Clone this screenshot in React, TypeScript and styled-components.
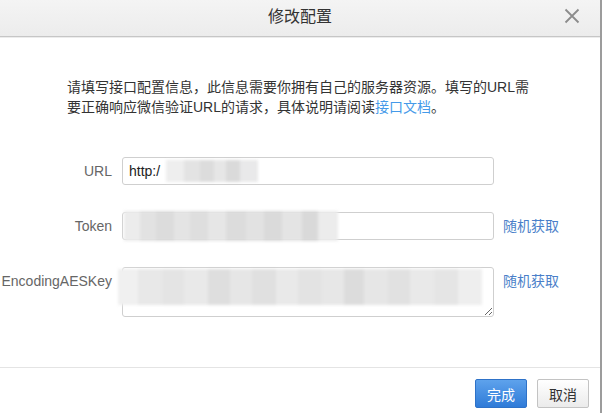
import React from "react";
import styled, { createGlobalStyle } from "styled-components";

const Global = createGlobalStyle`
  html, body { margin: 0; padding: 0; background: #fff; }
  body { font-family: "Liberation Sans", "Noto Sans CJK SC", Arial, sans-serif; }
  * { box-sizing: border-box; }
`;

const Dialog = styled.div`
  width: 602px;
  height: 413px;
  display: flex;
  flex-direction: column;
  background: #fff;
  border-right: 2px solid #9c9c9c;
  overflow: hidden;
`;

const Header = styled.div`
  position: relative;
  height: 37px;
  flex: none;
  display: flex;
  align-items: center;
  justify-content: center;
  background: linear-gradient(#f4f4f4, #ececec);
  border-bottom: 1px solid #c6c6c6;
  box-shadow: 0 1px 0 #ececec;
`;

const Title = styled.h3`
  margin: 0;
  font-size: 16px;
  font-weight: normal;
  color: #333;
  line-height: 36px;
  padding-bottom: 2px;
`;

const Close = styled.button`
  position: absolute;
  right: 19px;
  top: 7px;
  width: 18px;
  height: 18px;
  padding: 0;
  border: 0;
  background: transparent;
  display: flex;
  align-items: center;
  justify-content: center;
`;

const Body = styled.div`
  flex: 1;
  padding: 40px 0 0 0;
`;

const Desc = styled.p`
  margin: 0 0 40px 67px;
  width: 466px;
  font-size: 14px;
  line-height: 20px;
  color: #333;
`;

const DocLink = styled.a`
  color: #459ae9;
  text-decoration: none;
`;

const Form = styled.div`
  display: grid;
  grid-template-columns: 112px 372px auto;
  column-gap: 10px;
  row-gap: 27px;
  align-items: start;
`;

const Label = styled.label`
  text-align: right;
  font-size: 14px;
  line-height: 28px;
  color: #666;
  white-space: nowrap;
`;

const Field = styled.div`
  position: relative;
`;

const Input = styled.div`
  height: 28px;
  border: 1px solid #cfcfcf;
  border-radius: 3px;
  padding: 0 6px;
  font-size: 14px;
  line-height: 26px;
  color: #222;
  background: #fff;
`;

const Area = styled.textarea`
  display: block;
  width: 372px;
  height: 50px;
  border: 1px solid #cfcfcf;
  border-radius: 3px;
  background: #fff;
  margin: 0;
  font-size: 14px;
`;

const Mosaic = styled.div`
  position: absolute;
  display: flex;
  filter: blur(1.5px);
  pointer-events: none;
`;

const Tile = styled.span<{ $c: string; $w: number; $h: number }>`
  display: block;
  width: ${(p) => p.$w}px;
  height: ${(p) => p.$h}px;
  background: ${(p) => p.$c};
`;

const Action = styled.a`
  font-size: 14px;
  line-height: 28px;
  color: #4a7fc9;
  text-decoration: none;
  margin-left: -1px;
`;

const Empty = styled.span``;

const Footer = styled.div`
  flex: none;
  height: 46px;
  border-top: 1px solid #e4e4e4;
  display: flex;
  justify-content: flex-end;
  align-items: flex-start;
  gap: 10px;
  padding: 11px 11px 0 0;
`;

const Btn = styled.button<{ $primary?: boolean }>`
  width: 52px;
  height: 29px;
  border-radius: 2px;
  font-family: inherit;
  font-size: 14px;
  padding: 0;
  border: 1px solid ${(p) => (p.$primary ? "#2e72c8" : "#c3c3c3")};
  color: ${(p) => (p.$primary ? "#fff" : "#333")};
  background: ${(p) =>
    p.$primary
      ? "linear-gradient(#5ea2ec, #2f7bd8)"
      : "linear-gradient(#ffffff, #ebebeb)"};
`;

type T = [string, number];
const urlTiles: T[] = [["#eeeeee", 18], ["#e3e3e3", 16], ["#dcdcdc", 14], ["#e6e6e6", 12], ["#dadada", 14], ["#e9e9ea", 18]];
const tokenTiles: T[] = [["#ececec", 16], ["#e2e2e2", 16], ["#dcdcdc", 18], ["#e4e4e4", 16], ["#dedede", 18], ["#e6e6e6", 18], ["#dcdcdc", 20], ["#e2e2e2", 18], ["#dadada", 18], ["#e4e4e4", 20], ["#d9d9d9", 16], ["#ececec", 20]];
const keyTiles: T[] = [["#f0f0f0", 20], ["#e8e8e8", 24], ["#e4e4e4", 22], ["#e9e9e9", 24], ["#dedede", 22], ["#e6e6e6", 22], ["#e0e0e0", 24], ["#e9e9e9", 22], ["#e3e3e3", 24], ["#e7e7e7", 22], ["#dcdcdc", 20], ["#e6e6e6", 24], ["#e1e1e1", 22], ["#e9e9e9", 24], ["#e5e5e5", 24], ["#eeeeee", 24]];

const Blur = ({ tiles, h, style }: { tiles: T[]; h: number; style: React.CSSProperties }) => (
  <Mosaic style={style}>
    {tiles.map(([c, w], i) => (
      <Tile key={i} $c={c} $w={w} $h={h} />
    ))}
  </Mosaic>
);

export default function App() {
  return (
    <>
      <Global />
      <Dialog>
        <Header>
          <Title>修改配置</Title>
          <Close aria-label="close">
            <svg width="16" height="16" viewBox="0 0 16 16">
              <path d="M1.5 1.5 L14.5 14.5 M14.5 1.5 L1.5 14.5" stroke="#8c8c8c" strokeWidth="1.8" fill="none" />
            </svg>
          </Close>
        </Header>
        <Body>
          <Desc>
            请填写接口配置信息，此信息需要你拥有自己的服务器资源。填写的URL需要正确响应微信验证URL的请求，具体说明请阅读
            <DocLink href="#">接口文档</DocLink>。
          </Desc>
          <Form>
            <Label>URL</Label>
            <Field>
              <Input>http:/</Input>
              <Blur tiles={urlTiles} h={22} style={{ left: 44, top: 3 }} />
            </Field>
            <Empty />

            <Label>Token</Label>
            <Field>
              <Input />
              <Blur tiles={tokenTiles} h={30} style={{ left: 2, top: -1 }} />
            </Field>
            <Action href="#">随机获取</Action>

            <Label>EncodingAESKey</Label>
            <Field>
              <Area readOnly defaultValue="" />
              <Blur tiles={keyTiles} h={36} style={{ left: -4, top: 2 }} />
            </Field>
            <Action href="#">随机获取</Action>
          </Form>
        </Body>
        <Footer>
          <Btn $primary>完成</Btn>
          <Btn>取消</Btn>
        </Footer>
      </Dialog>
    </>
  );
}
